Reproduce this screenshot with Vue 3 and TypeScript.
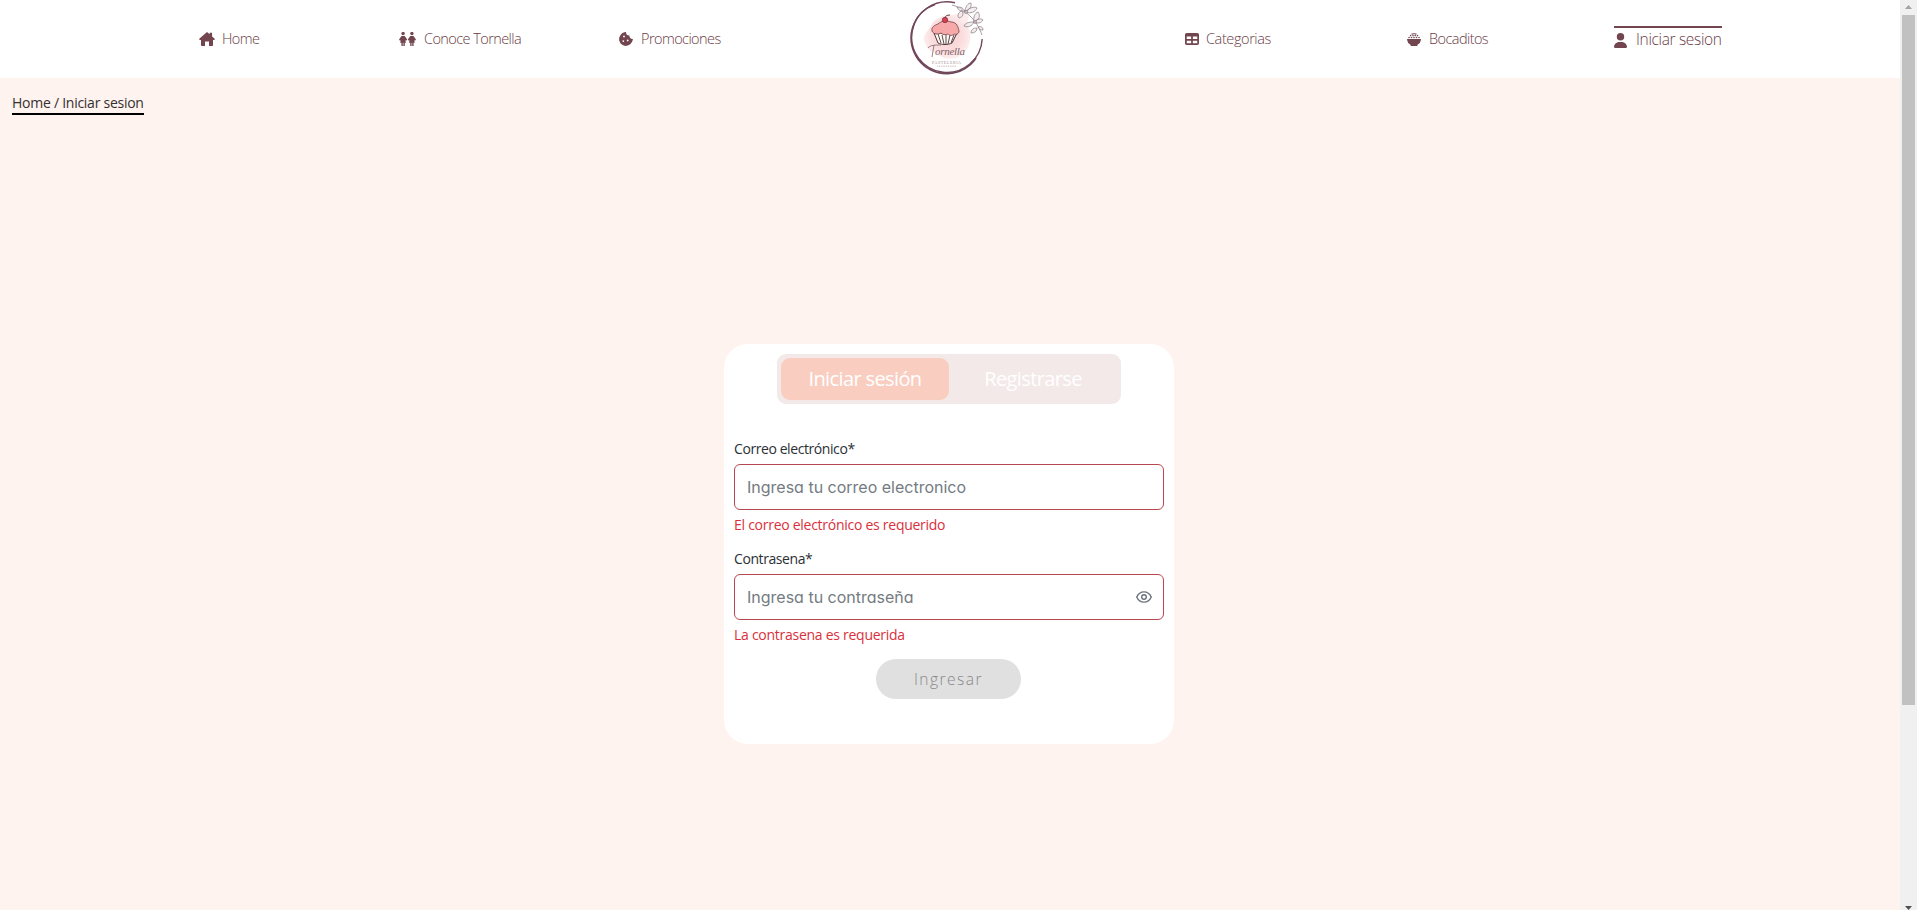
<script setup lang="ts">
import { ref } from 'vue'

interface NavItem {
  label: string
  icon: string
  active?: boolean
}

const left: NavItem[] = [
  { label: 'Home', icon: 'home' },
  { label: 'Conoce Tornella', icon: 'people' },
  { label: 'Promociones', icon: 'cookie' },
]
const right: NavItem[] = [
  { label: 'Categorias', icon: 'table' },
  { label: 'Bocaditos', icon: 'bowl' },
  { label: 'Iniciar sesion', icon: 'user', active: true },
]
const items: (NavItem | null)[] = [...left, null, ...right]

const email = ref('')
const password = ref('')
const visible = ref(false)
</script>

<template>
  <div class="window">
    <div class="page">
      <nav class="nav">
        <template v-for="(item, i) in items" :key="i">
          <a v-if="item" :class="['link', item.icon, { active: item.active }]">
            <svg v-if="item.icon === 'home'" class="icon" viewBox="0 0 16 14">
              <path d="M8 0 10.6 2.2V.8h2.5v3.6L16 7l-.8 1H14v5.2a.8.8 0 0 1-.8.8H10V9.6H6V14H2.8a.8.8 0 0 1-.8-.8V8H.8L0 7Z" />
            </svg>
            <svg v-else-if="item.icon === 'people'" class="icon" viewBox="0 0 17 14">
              <g v-for="x in [0, 8.8]" :key="x" :transform="`translate(${x} 0)`">
                <circle cx="4.1" cy="1.6" r="1.7" />
                <path d="M2.5 4h3.2l2.5 3.6-1.1 1.2-.8-.6.7 2.5H5.8V14H4.4v-3.2h-.6V14H2.4v-3.3H1.1l.7-2.5-.8.6L0 7.6Z" />
              </g>
            </svg>
            <svg v-else-if="item.icon === 'cookie'" class="icon" viewBox="0 0 14 14">
              <path fill-rule="evenodd" d="M7 .1A3.4 3.4 0 0 0 10.4 3.6 3.4 3.4 0 0 0 13.9 7c-.1 1-.4 2-1 3l-1.6 2.2-2.5 1.4-2.6.3-2.6-.8-2.2-1.8L.2 8.6.1 6 1.2 3.4 3 1.3 5.3.2ZM5 3.6a.9.9 0 1 0 0 1.8.9.9 0 0 0 0-1.8Zm-.7 4.6a.9.9 0 1 0 0 1.8.9.9 0 0 0 0-1.8Zm4.4-.7a.9.9 0 1 0 0 1.8.9.9 0 0 0 0-1.8Z" />
            </svg>
            <svg v-else-if="item.icon === 'table'" class="icon" viewBox="0 32 512 448" preserveAspectRatio="none">
              <path d="M64 256V160H224v96H64zm0 64H224v96H64V320zm224 96V320H448v96H288zM448 256H288V160H448v96zM64 32C28.7 32 0 60.7 0 96V416c0 35.3 28.7 64 64 64H448c35.3 0 64-28.7 64-64V96c0-35.3-28.7-64-64-64H64z" />
            </svg>
            <svg v-else-if="item.icon === 'bowl'" class="icon" viewBox="0 0 14 13">
              <circle v-for="[x, y] in [[5.2, 1], [7, .7], [8.8, 1], [3.6, 2.6], [6, 2.6], [8.2, 2.6], [10.5, 2.6], [2, 4.5], [4.5, 4.5], [7, 4.5], [9.5, 4.5], [12, 4.5]]" :key="`${x}-${y}`" :cx="x" :cy="y" r=".8" />
              <path d="M.6 6h12.8a.6.6 0 0 1 .6.7 6.5 6.5 0 0 1-3.5 5v.6a.7.7 0 0 1-.7.7H4.2a.7.7 0 0 1-.7-.7v-.6A6.5 6.5 0 0 1 0 6.7.6.6 0 0 1 .6 6Z" />
            </svg>
            <svg v-else class="icon" viewBox="0 0 448 512">
              <path d="M224 256A128 128 0 1 0 224 0a128 128 0 1 0 0 256zm-45.7 48C79.8 304 0 383.8 0 482.3C0 498.7 13.3 512 29.7 512H418.3c16.4 0 29.7-13.3 29.7-29.7C448 383.8 368.2 304 269.7 304H178.3z" />
            </svg>
            <span class="label">{{ item.label }}</span>
          </a>
          <svg v-else class="logo" viewBox="0 0 76 76">
            <defs>
              <radialGradient id="blush">
                <stop offset="0" stop-color="#f8cdd0" />
                <stop offset=".65" stop-color="#fbdcdd" />
                <stop offset="1" stop-color="#fdecec" />
              </radialGradient>
            </defs>
            <path d="M16 43c-4-8 4-12 8-21 8-8 18-6 24-8 7-3 14 0 11 6-2 6 4 11 2 21-2 9-8 17-16 17-10 2-15-2-19-6-5 0-8-3-10-9Z" fill="url(#blush)" />
            <g fill="none" stroke="#70465a">
              <path d="M46 2.8A35.3 35.3 0 1 0 73.2 39" stroke-width="1.4" />
              <path d="M26 4.5A35.5 35.5 0 1 0 67 58" stroke-width="1.8" />
            </g>
            <g fill="#ece5e8" fill-opacity=".6" stroke="#86757c" stroke-width=".7">
              <path d="M43 5c8 2 14 7 19 12s8 10 11 18" fill="none" />
              <path d="M56 12c0-5 3-9 6-9 1 4-2 7-6 9Zm0 0c4-4 9-6 12-4-2 4-6 6-12 4Zm0 0c-4 0-7-2-8-5 4 0 7 1 8 5Zm9 10c-1-5 1-9 4-10 3 4 1 8-4 10Zm0 0c3-3 7-4 9-2-2 3-5 4-9 2Zm0 0c-5 0-9 1-10 4 4 2 8 0 10-4Zm3 6c-4 0-6 2-6 5 4 0 6-2 6-5Zm1-1c3-1 5 0 5 3-3 0-4-1-5-3ZM53 10c-4 3-5 6-3 8 4-1 5-4 3-8Z" />
              <circle cx="57" cy="12" r="1.5" /><circle cx="66" cy="22" r="1.4" />
            </g>
            <path d="M25 33h23l-5 10c-4 2-10 2-14 0Z" fill="#fffaf4" stroke="#493438" />
            <path d="m29 34 3 9m1-8 2 9m2-9v9m4-9-2 9m6-9-3 8" stroke="#493438" stroke-width=".9" />
            <path d="M23 31c-1-4 3-6 6-7 3-3 8-4 13-2 6 0 7 5 8 9 0 3-3 4-5 3-2 2-4 2-6 0-3 1-5 1-7-1-3 2-8 1-9-2Z" fill="#f7a9aa" stroke="#6d4045" stroke-width=".8" />
            <circle cx="36" cy="20" r="2.7" fill="#d93e51" stroke="#762c38" stroke-width=".7" />
            <path d="M36 18c0-2 2-3 5-3" fill="none" stroke="#633b42" />
            <path d="M19 48c2-3 7-3 13-3m-7 0-2 12" fill="none" stroke="#84636b" stroke-width=".8" />
            <text x="26" y="55" textLength="30" class="script">ornella</text>
            <text x="23" y="64" textLength="29" class="sub">PASTELERIA</text>
            <path d="M28 66.2h19" stroke="#c0abb0" stroke-width=".8" stroke-dasharray="1.2 .6" />
          </svg>
        </template>
      </nav>

      <main class="main">
        <div class="crumb"><span class="label">Home / Iniciar sesion</span></div>
        <section class="card">
          <div class="tabs">
            <button class="tab selected"><span class="label">Iniciar sesión</span></button>
            <button class="tab"><span class="label">Registrarse</span></button>
          </div>
          <form class="form" @submit.prevent>
            <label class="caption"><span class="label">Correo electrónico*</span></label>
            <div class="field"><input v-model="email" type="email" placeholder="Ingresa tu correo electronico" /></div>
            <p class="error"><span class="label">El correo electrónico es requerido</span></p>
            <label class="caption"><span class="label">Contrasena*</span></label>
            <div class="field">
              <input v-model="password" :type="visible ? 'text' : 'password'" placeholder="Ingresa tu contraseña" />
              <svg class="eye" viewBox="0 0 16 12" @click="visible = !visible">
                <path d="M.7 6C2.2 2.8 4.8.9 8 .9S13.8 2.8 15.3 6C13.8 9.2 11.2 11.1 8 11.1S2.2 9.2.7 6Z" />
                <circle cx="8" cy="6" r="2.3" />
              </svg>
            </div>
            <p class="error"><span class="label">La contrasena es requerida</span></p>
            <button class="submit" disabled><span class="label">Ingresar</span></button>
          </form>
        </section>
      </main>
    </div>
    <div class="scrollbar">
      <svg viewBox="0 0 17 15"><path d="M5 9h7L8.5 5Z" fill="#a3a3a3" /></svg>
      <div class="thumb"></div>
      <svg class="down" viewBox="0 0 17 15"><path d="M5 11h7l-3.5 4Z" fill="#505050" /></svg>
    </div>
  </div>
</template>

<style>
body { overflow: hidden; }
</style>

<style scoped>
* { box-sizing: border-box; }
.window { display: flex; width: 1917px; height: 910px; font-family: "Open Sans", "Noto Sans", sans-serif; font-size: 14px; }
.page { flex: 1; background: #fff3ef; }
.nav { height: 78px; background: #fff; padding-left: 199px; display: grid; grid-template-columns: 200px 220px 291px 275px 222px 207px 108px; align-items: center; color: #6a3b45; }
.link { display: flex; align-items: center; height: 22px; font-size: 14.5px; font-weight: 300; letter-spacing: -.57px; white-space: nowrap; }
.link .label { position: relative; top: -1px; }
.icon { fill: #73464f; height: 14px; width: 16px; margin-right: 7px; flex: none; }
.people .icon { width: 17px; margin-right: 8px; }
.cookie .icon { width: 14px; margin-right: 8px; }
.table { letter-spacing: -.4px; }
.table .icon { width: 14px; height: 12px; }
.bowl .icon { width: 14px; height: 13px; margin-right: 8px; }
.user .icon { width: 13px; height: 15px; margin-right: 9px; }
.link.active { border-top: 2px solid #73464f; height: 26px; font-size: 15.5px; letter-spacing: -.34px; }
.logo { width: 76px; height: 76px; align-self: start; position: relative; left: -1px; }
.script { font: italic 11px "Liberation Serif", serif; fill: #84636b; }
.sub { font: 4px "Liberation Serif", serif; fill: #a18a90; }
.main { height: 832px; padding-top: 14px; }
.crumb { margin-left: 12px; width: 132px; height: 23px; line-height: 21px; letter-spacing: -.26px; border-bottom: 2px solid #000; color: #35302f; white-space: nowrap; }
.card { width: 450px; height: 400px; margin: 229px 0 0 724px; padding: 10px; border-radius: 24px; background: #fff; }
.tabs { width: 344px; height: 50px; margin-left: 43px; padding: 4px; display: flex; border-radius: 9px; background: #f3e9e9; }
.tab { width: 168px; border: 0; border-radius: 9px; padding: 0 0 1px; background: transparent; color: #fff; font: inherit; font-size: 20px; letter-spacing: -.62px; }
.selected { background: #f9cec1; }
.form { padding-top: 33px; display: flex; flex-direction: column; }
.caption { height: 27px; line-height: 23px; letter-spacing: -.42px; color: #2b3035; white-space: nowrap; }
.field { height: 46px; border: 1px solid #b8484f; border-radius: 6px; display: flex; align-items: center; padding: 0 11px 0 12px; }
.field input { flex: 1; border: 0; outline: 0; padding: 0; background: none; font: 16px Inter, sans-serif; font-feature-settings: "cv11"; }
.field input::placeholder { color: #747b82; opacity: 1; }
.eye { width: 16px; height: 12px; fill: none; stroke: #6b727d; stroke-width: 1.4; }
.error { margin: 0; height: 37px; line-height: 29px; letter-spacing: -.27px; color: #d9303c; white-space: nowrap; }
.submit { width: 145px; height: 40px; align-self: center; margin: 2px 1px 0 0; border: 0; border-radius: 20px; background: #e0e0e0; color: #87878b; font: inherit; font-size: 15.5px; font-weight: 300; letter-spacing: 1.5px; }
.scrollbar { width: 17px; background: #f0f0f0; display: flex; flex-direction: column; align-items: center; }
.scrollbar svg { width: 17px; height: 15px; flex: none; }
.thumb { width: 13px; height: 690px; background: #c1c1c1; }
.scrollbar .down { margin-top: auto; }
</style>
